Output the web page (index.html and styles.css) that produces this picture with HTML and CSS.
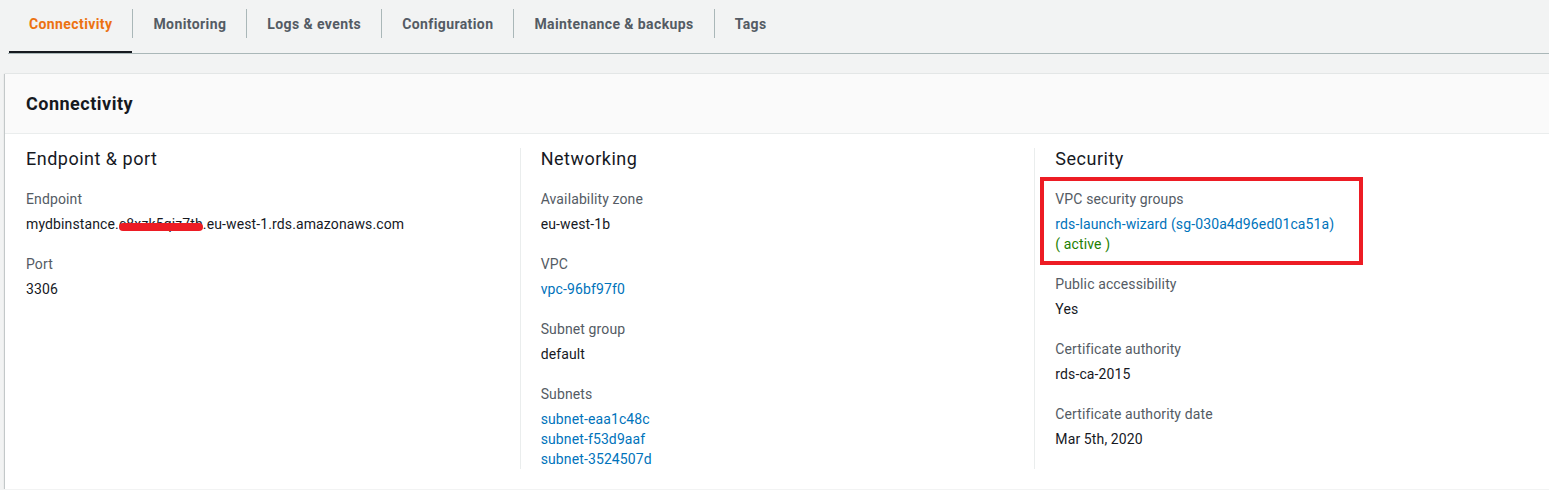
FILE: index.html
```html
<!DOCTYPE html>
<html lang="en">
<head>
<meta charset="utf-8">
<title>Connectivity</title>
<link rel="stylesheet" href="styles.css">
</head>
<body>
<nav class="tabs">
  <div class="tab active">Connectivity</div>
  <div class="tab">Monitoring</div>
  <div class="tab">Logs &amp; events</div>
  <div class="tab">Configuration</div>
  <div class="tab">Maintenance &amp; backups</div>
  <div class="tab">Tags</div>
</nav>
<section class="card">
  <header class="card-header">Connectivity</header>
  <div class="card-body">
    <div class="col">
      <h3 class="col-title">Endpoint &amp; port</h3>
      <div class="field">
        <div class="label">Endpoint</div>
        <div class="value">mydbinstance.<span class="redacted">c8xzk5qiz7th</span>.eu-west-1.rds.amazonaws.com</div>
      </div>
      <div class="field">
        <div class="label">Port</div>
        <div class="value">3306</div>
      </div>
    </div>
    <div class="col">
      <h3 class="col-title">Networking</h3>
      <div class="field">
        <div class="label">Availability zone</div>
        <div class="value">eu-west-1b</div>
      </div>
      <div class="field">
        <div class="label">VPC</div>
        <div class="value"><a class="link" href="#">vpc-96bf97f0</a></div>
      </div>
      <div class="field">
        <div class="label">Subnet group</div>
        <div class="value">default</div>
      </div>
      <div class="field">
        <div class="label">Subnets</div>
        <div class="value list">
          <a class="link" href="#">subnet-eaa1c48c</a>
          <a class="link" href="#">subnet-f53d9aaf</a>
          <a class="link" href="#">subnet-3524507d</a>
        </div>
      </div>
    </div>
    <div class="col">
      <h3 class="col-title">Security</h3>
      <div class="field highlighted">
        <div class="label">VPC security groups</div>
        <div class="value list">
          <a class="link" href="#">rds-launch-wizard (sg-030a4d96ed01ca51a)</a>
          <span class="status">( active )</span>
        </div>
      </div>
      <div class="field">
        <div class="label">Public accessibility</div>
        <div class="value">Yes</div>
      </div>
      <div class="field">
        <div class="label">Certificate authority</div>
        <div class="value">rds-ca-2015</div>
      </div>
      <div class="field">
        <div class="label">Certificate authority date</div>
        <div class="value">Mar 5th, 2020</div>
      </div>
    </div>
  </div>
</section>
</body>
</html>
```
FILE: styles.css
```css
html, body {
  margin: 0;
  padding: 0;
  overflow: hidden;
}
body {
  background: #f2f3f3;
  font-family: Roboto, "Noto Sans", sans-serif;
  font-size: 14px;
  line-height: 20px;
  letter-spacing: 0.12px;
  color: #16191f;
}
.tabs {
  display: flex;
  margin-left: 8px;
  height: 53px;
  border-bottom: 1px solid #aab7b8;
}
.tab {
  position: relative;
  display: flex;
  align-items: center;
  padding: 0 20px 5px 20px;
  font-weight: 700;
  letter-spacing: 0.4px;
  color: #545b64;
  border-left: 1px solid transparent;
}
.tab + .tab::before {
  content: "";
  position: absolute;
  left: -1px;
  top: 9px;
  height: 29px;
  width: 1px;
  background: #aab7b8;
}
.tab.active {
  color: #ec7211;
}
.tab.active::after {
  content: "";
  position: absolute;
  left: 0;
  right: 0;
  bottom: 0;
  height: 2px;
  background: #16191f;
}
.card {
  margin: 19px 0 0 5px;
  background: #fff;
  border-top: 1px solid #e3e6e6;
  box-shadow: 0 1px 1px 0 rgba(0, 28, 36, 0.3), -1px 1px 1px 0 rgba(0, 28, 36, 0.15);
}
.card-header {
  background: #fafafa;
  border-bottom: 1px solid #eaeded;
  padding: 19px 21px 18px 21px;
  font-size: 18px;
  line-height: 22px;
  font-weight: 700;
  letter-spacing: 0.5px;
  color: #16191f;
}
.card-body {
  display: grid;
  grid-template-columns: repeat(3, 1fr);
  padding: 14px 0 20px 0;
}
.col {
  padding: 0 20px;
  border-left: 1px solid #eaeded;
}
.col:first-child {
  border-left-color: transparent;
}
.col-title {
  margin: 0 0 19px 0;
  font-size: 18px;
  line-height: 22px;
  font-weight: 400;
  letter-spacing: 0.5px;
  color: #16191f;
}
.field + .field {
  margin-top: 20px;
}
.label {
  color: #545b64;
  margin-bottom: 5px;
}
.value {
  color: #16191f;
}
.list {
  display: flex;
  flex-direction: column;
  align-items: flex-start;
}
.link {
  color: #0073bb;
  text-decoration: none;
}
.status {
  color: #1d8102;
}
.redacted {
  position: relative;
}
.redacted::after {
  content: "";
  position: absolute;
  left: 0;
  right: 0;
  top: 7px;
  height: 8px;
  border-radius: 4px;
  background: #ed1c24;
}
.highlighted {
  position: relative;
}
.highlighted::before {
  content: "";
  position: absolute;
  left: -15px;
  top: -12px;
  width: 315px;
  height: 80px;
  border: 4px solid #ed1c24;
}
```
